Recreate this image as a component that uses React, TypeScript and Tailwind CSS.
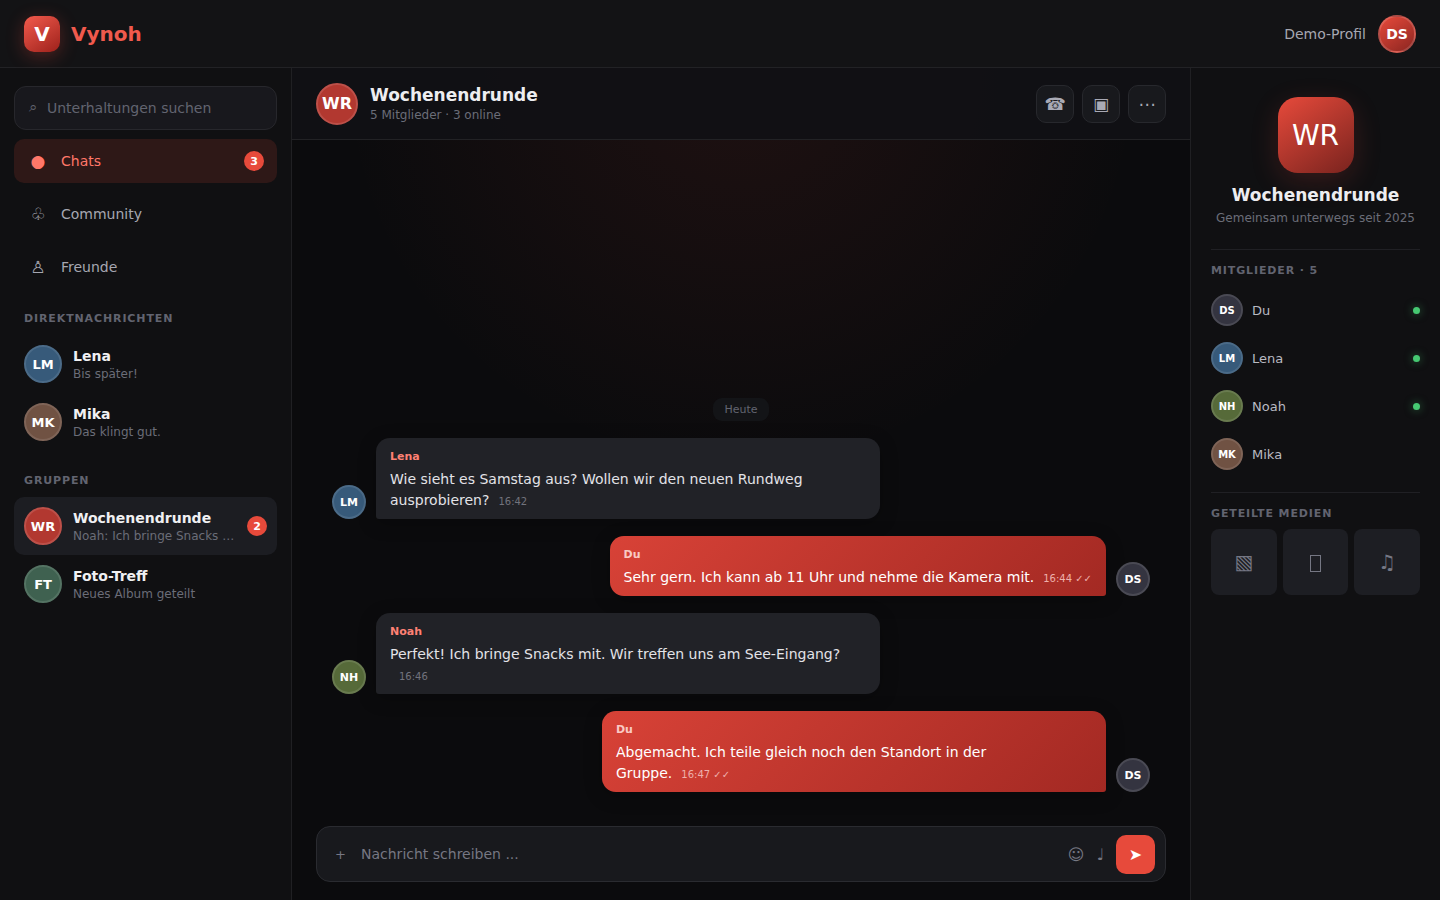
import { useState } from 'react';

const AVATAR_COLORS: Record<string, string> = {
  LM: 'bg-[#375a7a] border-[#4b6b88]',
  MK: 'bg-[#705243] border-[#7f6457]',
  WR: 'bg-[#b23830] border-[#bd5049]',
  FT: 'bg-[#3f6150] border-[#547363]',
  NH: 'bg-[#566a39] border-[#697b4f]',
  DS: 'bg-[#343440] border-[#4a4a54]',
};

const AVATAR_SIZES = {
  sm: 'size-8 text-[10px]',
  md: 'size-[34px] text-[11px]',
  lg: 'size-[38px] text-[13px]',
  xl: 'size-[42px] text-[16px]',
};

const NAV = [
  { icon: '●', label: 'Chats', badge: 3 },
  { icon: '♧', label: 'Community' },
  { icon: '♙', label: 'Freunde' },
];

const DIRECT = [
  { initials: 'LM', name: 'Lena', preview: 'Bis später!' },
  { initials: 'MK', name: 'Mika', preview: 'Das klingt gut.' },
];

const GROUPS = [
  { initials: 'WR', name: 'Wochenendrunde', preview: 'Noah: Ich bringe Snacks mit.', unread: 2 },
  { initials: 'FT', name: 'Foto-Treff', preview: 'Neues Album geteilt' },
];

const MESSAGES = [
  {
    initials: 'LM',
    author: 'Lena',
    text: 'Wie sieht es Samstag aus? Wollen wir den neuen Rundweg ausprobieren?',
    time: '16:42',
  },
  {
    initials: 'DS',
    author: 'Du',
    text: 'Sehr gern. Ich kann ab 11 Uhr und nehme die Kamera mit.',
    time: '16:44 ✓✓',
    own: true,
  },
  {
    initials: 'NH',
    author: 'Noah',
    text: 'Perfekt! Ich bringe Snacks mit. Wir treffen uns am See-Eingang?',
    time: '16:46',
  },
  {
    initials: 'DS',
    author: 'Du',
    text: 'Abgemacht. Ich teile gleich noch den Standort in der Gruppe.',
    time: '16:47 ✓✓',
    own: true,
  },
];

const MEMBERS = [
  { initials: 'DS', name: 'Du', online: true },
  { initials: 'LM', name: 'Lena', online: true },
  { initials: 'NH', name: 'Noah', online: true },
  { initials: 'MK', name: 'Mika', online: false },
];

function Avatar({ initials, size }: { initials: string; size: keyof typeof AVATAR_SIZES }) {
  return (
    <span
      className={`flex shrink-0 items-center justify-center rounded-full border-2 leading-[normal] font-bold text-white ${AVATAR_SIZES[size]} ${AVATAR_COLORS[initials]}`}
    >
      {initials}
    </span>
  );
}

function Badge({ count }: { count: number }) {
  return (
    <span className="flex size-5 shrink-0 items-center justify-center rounded-full bg-[#e74a3b] text-[11px] leading-[normal] font-bold text-white">
      {count}
    </span>
  );
}

function SectionTitle({ children }: { children: string }) {
  return (
    <h2 className="text-[11px] leading-[18px] font-bold tracking-[0.08em] text-[#626470] uppercase">{children}</h2>
  );
}

type Conversation = { initials: string; name: string; preview: string; unread?: number };

function ConversationRow({ item, active, onSelect }: { item: Conversation; active: boolean; onSelect: () => void }) {
  return (
    <button
      onClick={onSelect}
      className={`flex w-full items-center gap-[11px] rounded-[10px] p-[10px] text-left ${active ? 'bg-[#1c1d22]' : ''}`}
    >
      <Avatar initials={item.initials} size="lg" />
      <span className="min-w-0 flex-1">
        <strong className="block truncate text-sm leading-5 text-[#f0f0f2]">{item.name}</strong>
        <span className="block truncate text-xs leading-4 text-[#6b6d78]">{item.preview}</span>
      </span>
      {item.unread && <Badge count={item.unread} />}
    </button>
  );
}

function Sidebar() {
  const [section, setSection] = useState('Chats');
  const [open, setOpen] = useState('Wochenendrunde');

  return (
    <aside className="w-[292px] shrink-0 border-r border-[#202023] bg-[#101012] px-[14px] py-[18px]">
      <label className="flex h-11 items-center gap-[10px] rounded-xl border border-[#27272c] bg-[#18181d] px-[14px] text-sm text-[#626470]">
        <span aria-hidden="true" className="text-[15px]">
          ⌕
        </span>
        <input
          type="search"
          aria-label="Unterhaltungen suchen"
          placeholder="Unterhaltungen suchen"
          className="min-w-0 flex-1 bg-transparent outline-none placeholder:text-[#626470]"
        />
      </label>

      <nav className="mt-[9px] flex flex-col gap-[9px]">
        {NAV.map((item) => (
          <button
            key={item.label}
            onClick={() => setSection(item.label)}
            className={`flex h-11 items-center gap-3 rounded-[10px] px-[13px] text-left text-sm ${
              section === item.label ? 'bg-[#2e1817] text-[#ff7769]' : 'text-[#a6a7b1]'
            }`}
          >
            <span aria-hidden="true" className="w-[22px] text-center text-[17px]">
              {item.icon}
            </span>
            <span className="flex-1">{item.label}</span>
            {item.badge && <Badge count={item.badge} />}
          </button>
        ))}
      </nav>

      <div className="mt-[21px] mb-[7px] px-[10px]">
        <SectionTitle>Direktnachrichten</SectionTitle>
      </div>
      {DIRECT.map((item) => (
        <ConversationRow key={item.name} item={item} active={open === item.name} onSelect={() => setOpen(item.name)} />
      ))}

      <div className="mt-[21px] mb-[7px] px-[10px]">
        <SectionTitle>Gruppen</SectionTitle>
      </div>
      {GROUPS.map((item) => (
        <ConversationRow key={item.name} item={item} active={open === item.name} onSelect={() => setOpen(item.name)} />
      ))}
    </aside>
  );
}

function Message({ message }: { message: (typeof MESSAGES)[number] }) {
  const { own } = message;
  return (
    <div className={`flex max-w-[67%] items-end gap-[10px] ${own ? 'flex-row-reverse self-end' : 'self-start'}`}>
      <Avatar initials={message.initials} size="md" />
      <div
        className={`rounded-[14px] px-[14px] pt-[11px] pb-2 shadow-[0_4px_18px_rgba(0,0,0,0.25)] ${
          own
            ? 'rounded-br-[3px] bg-linear-[135deg] from-[#d84237] to-[#a32923] text-white'
            : 'rounded-bl-[3px] bg-[#212227] text-[#e3e3e7]'
        }`}
      >
        <strong className={`mb-1 block text-[11px] leading-4 ${own ? 'text-[#f9c9c4]' : 'text-[#ff8174]'}`}>
          {message.author}
        </strong>
        <p className="text-sm leading-[21px]">
          {message.text}
          <time
            className={`ml-[9px] text-[10px] leading-none whitespace-nowrap ${own ? 'text-[#eeb0ab]' : 'text-[#72737d]'}`}
          >
            {message.time}
          </time>
        </p>
      </div>
    </div>
  );
}

function HeaderButton({ icon, label }: { icon: string; label: string }) {
  return (
    <button
      aria-label={label}
      className="flex size-[38px] items-center justify-center rounded-[10px] border border-[#27282d] bg-[#18191d] text-[17px] leading-[normal] text-[#a9aab5]"
    >
      {icon}
    </button>
  );
}

function Chat() {
  const [draft, setDraft] = useState('');

  return (
    <main className="flex min-w-0 flex-1 flex-col bg-[#0b0b0d] bg-[radial-gradient(circle_at_50%_0%,rgba(231,74,59,0.09),transparent_400px)]">
      <header className="flex h-[72px] shrink-0 items-center gap-3 border-b border-[#222225] bg-[#111115]/95 px-6">
        <Avatar initials="WR" size="xl" />
        <div className="flex-1">
          <h1 className="text-[17px] leading-[22px] font-bold text-[#ededf0]">Wochenendrunde</h1>
          <p className="text-xs leading-[18px] text-[#6b6d78]">5 Mitglieder · 3 online</p>
        </div>
        <div className="flex gap-2">
          <HeaderButton icon="☎" label="Anrufen" />
          <HeaderButton icon="▣" label="Videoanruf" />
          <HeaderButton icon="⋯" label="Mehr" />
        </div>
      </header>

      <section className="flex flex-1 flex-col justify-end gap-[17px] px-10 pt-6 pb-[34px]">
        <span className="self-center rounded-[9px] bg-[#131417] px-[11px] py-1 text-[11px] leading-[15px] text-[#626470]">
          Heute
        </span>
        {MESSAGES.map((message) => (
          <Message key={message.time} message={message} />
        ))}
      </section>

      <form
        onSubmit={(e) => {
          e.preventDefault();
          setDraft('');
        }}
        className="mx-6 mb-[18px] flex h-14 shrink-0 items-center gap-3 rounded-[14px] border border-[#2a2b30] bg-[#18191d] pr-[10px] pl-[18px] leading-[normal] text-[#767783]"
      >
        <button type="button" aria-label="Anhang hinzufügen" className="mr-1 w-[10px] text-[13px]">
          +
        </button>
        <input
          aria-label="Nachricht schreiben"
          placeholder="Nachricht schreiben ..."
          value={draft}
          onChange={(e) => setDraft(e.target.value)}
          className="min-w-0 flex-1 bg-transparent text-sm text-[#e3e3e7] outline-none placeholder:text-[#767783]"
        />
        <button type="button" aria-label="Emoji" className="text-[16px]">
          ☺
        </button>
        <button type="button" aria-label="Sprachnachricht" className="text-[16px]">
          ♩
        </button>
        <button
          type="submit"
          aria-label="Senden"
          className="flex size-[39px] items-center justify-center rounded-[10px] bg-[#e74a3b] text-[16px] text-white"
        >
          ➤
        </button>
      </form>
    </main>
  );
}

function Details() {
  return (
    <aside className="w-[250px] shrink-0 border-l border-[#202023] bg-[#101012] px-5 pt-[29px]">
      <div className="flex flex-col items-center border-b border-[#202024] pb-[22px]">
        <div className="flex size-[76px] items-center justify-center rounded-[20px] bg-linear-[145deg] from-[#e74a3b] to-[#79231e] text-[28px] leading-[normal] text-white shadow-[0_8px_28px_rgba(231,74,59,0.18)]">
          WR
        </div>
        <h2 className="mt-[11px] text-[17px] leading-[22px] font-bold text-[#ededf0]">Wochenendrunde</h2>
        <p className="mt-[3px] text-xs leading-[18px] whitespace-nowrap text-[#6b6d78]">Gemeinsam unterwegs seit 2025</p>
      </div>

      <div className="border-b border-[#202024] pt-3 pb-[14px]">
        <SectionTitle>Mitglieder · 5</SectionTitle>
        <ul className="mt-[6px]">
          {MEMBERS.map((member) => (
            <li key={member.name} className="flex h-12 items-center gap-[9px] text-[13px] leading-[normal] text-[#b9bac2]">
              <Avatar initials={member.initials} size="sm" />
              <span className="flex-1">{member.name}</span>
              {member.online && <span className="size-[7px] rounded-full bg-[#46c972] shadow-[0_0_8px_rgba(70,201,114,0.5)]" />}
            </li>
          ))}
        </ul>
      </div>

      <div className="pt-3">
        <SectionTitle>Geteilte Medien</SectionTitle>
        <div className="mt-[6px] grid grid-cols-3 gap-[6px] text-xl text-[#757783]">
          <button aria-label="Bilder" className="flex aspect-square items-center justify-center rounded-lg bg-[#1d1e23]">
            ▧
          </button>
          <button aria-label="Dateien" className="flex aspect-square items-center justify-center rounded-lg bg-[#1d1e23]">
            <svg width="12" height="20" viewBox="0 0 12 20" fill="none" stroke="currentColor">
              <rect x="1.5" y="3.5" width="10" height="16" />
            </svg>
          </button>
          <button aria-label="Musik" className="flex aspect-square items-center justify-center rounded-lg bg-[#1d1e23]">
            ♫
          </button>
        </div>
      </div>
    </aside>
  );
}

export default function App() {
  return (
    <div className="flex min-h-screen flex-col bg-[#0b0b0d] font-['DejaVu_Sans',sans-serif]">
      <header className="flex h-[68px] shrink-0 items-center justify-between border-b border-[#222225] bg-[#131315] px-6">
        <a href="#" className="flex items-center gap-[11px] text-xl font-bold text-[#f05a4d]">
          <span className="flex size-9 items-center justify-center rounded-[10px] bg-linear-[145deg] from-[#f35b4d] to-[#9d211b] text-white shadow-[0_4px_18px_rgba(231,74,59,0.3)]">
            V
          </span>
          Vynoh
        </a>
        <button className="flex items-center gap-3 text-sm text-[#a6a7b1]">
          Demo-Profil
          <span className="flex size-[38px] items-center justify-center rounded-full border-2 border-white/15 bg-linear-[145deg] from-[#e74a3b] to-[#8b2520] font-bold text-white">
            DS
          </span>
        </button>
      </header>
      <div className="flex flex-1">
        <Sidebar />
        <Chat />
        <Details />
      </div>
    </div>
  );
}
